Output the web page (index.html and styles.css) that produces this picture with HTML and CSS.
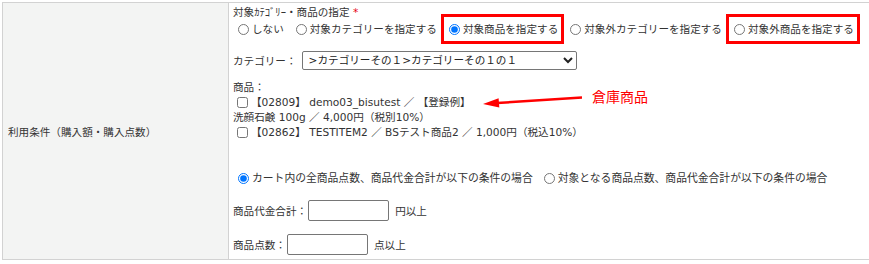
FILE: index.html
```html
<!DOCTYPE html>
<html lang="ja">
<head>
    <meta charset="utf-8">
    <title>利用条件</title>
    <link rel="stylesheet" href="styles.css">
</head>
<body>
    <div class="sheet">
        <table class="form-table">
            <tr>
                <th>利用条件（購入額・購入点数）</th>
                <td>
                    <div class="field-title">対象ｶﾃｺﾞﾘｰ・商品の指定 <span class="required">*</span></div>
                    <div class="choice-row">
                        <label class="choice"><input type="radio" name="target_type">しない</label>
                        <label class="choice"><input type="radio" name="target_type">対象カテゴリーを指定する</label>
                        <label class="choice marked"><input type="radio" name="target_type" checked>対象商品を指定する</label>
                        <label class="choice"><input type="radio" name="target_type">対象外カテゴリーを指定する</label>
                        <label class="choice marked"><input type="radio" name="target_type">対象外商品を指定する</label>
                    </div>

                    <div class="category-row">
                        <label for="category">カテゴリー：</label>
                        <select id="category" class="category-select">
                            <option>&gt;カテゴリーその１&gt;カテゴリーその１の１</option>
                        </select>
                    </div>

                    <div class="item-list">
                        <div>商品：</div>
                        <label class="item"><input type="checkbox">【02809】 demo03_bisutest ／ 【登録例】<br>洗顔石鹸 100g ／ 4,000円（税別10%）</label>
                        <label class="item"><input type="checkbox">【02862】 TESTITEM2 ／ BSテスト商品2 ／ 1,000円（税込10%）</label>
                    </div>

                    <div class="choice-row condition-row">
                        <label class="choice"><input type="radio" name="condition_type" checked>カート内の全商品点数、商品代金合計が以下の条件の場合</label>
                        <label class="choice"><input type="radio" name="condition_type">対象となる商品点数、商品代金合計が以下の条件の場合</label>
                    </div>

                    <div class="limit-row">
                        <label for="min_total">商品代金合計：</label>
                        <input class="limit-input" type="text" id="min_total">
                        <span>円以上</span>
                    </div>
                    <div class="limit-row">
                        <label for="min_count">商品点数：</label>
                        <input class="limit-input" type="text" id="min_count">
                        <span>点以上</span>
                    </div>
                </td>
            </tr>
        </table>

        <svg class="note-arrow" width="110" height="20" viewBox="0 0 110 20">
            <line x1="19" y1="13" x2="104" y2="7.5" stroke="#f00" stroke-width="2.5"/>
            <polygon points="5,14 21.3,17.6 20.6,8.3" fill="#f00"/>
        </svg>
        <span class="note-text">倉庫商品</span>
    </div>
</body>
</html>
```

FILE: styles.css
```css
body {
    margin: 0;
    font-family: "DejaVu Sans", "Noto Sans CJK JP", sans-serif;
    font-size: 10.6px;
    color: #333333;
    background-color: #ffffff;
    overflow: hidden;
}

.sheet {
    position: relative;
    padding: 2px 0 0 2px;
}

.form-table {
    border-collapse: collapse;
    width: 900px;
}

.form-table th,
.form-table td {
    border: 1px solid #d2d2d2;
}

.form-table th {
    width: 220px;
    padding: 0 0 0 5px;
    background-color: #f3f4f3;
    font-weight: normal;
    text-align: left;
    vertical-align: middle;
}

.form-table td {
    padding: 1px 0 4px 4px;
    vertical-align: top;
}

.field-title {
    line-height: 17px;
}

.required {
    color: #e60012;
}

.choice-row {
    display: flex;
    column-gap: 7px;
    line-height: 17px;
}

.choice {
    position: relative;
    display: flex;
    align-items: center;
}

.choice input {
    width: 11px;
    height: 11px;
    margin: 0 3px 0 5px;
}

/* red annotation frame */
.choice.marked::after {
    content: "";
    position: absolute;
    top: -7px;
    bottom: -6px;
    left: -3px;
    right: -6px;
    border: 3px solid #f00;
}

.category-row {
    display: flex;
    align-items: center;
    height: 20px;
    margin-top: 12px;
}

.category-select {
    width: 275px;
    height: 19px;
    margin-left: 5px;
    padding: 0 2px;
    font: inherit;
    color: #222222;
    border: 1px solid #767676;
    border-radius: 2px;
    background-color: #ffffff;
}

.item-list {
    margin-top: 10px;
    line-height: 15px;
}

.item {
    display: block;
}

.item input {
    width: 11px;
    height: 11px;
    margin: 0 3px 0 4px;
    vertical-align: -2px;
}

.condition-row {
    margin-top: 30px;
    font-size: 10.8px;
    column-gap: 6px;
}

.limit-row {
    display: flex;
    align-items: center;
    height: 21px;
    margin-top: 13px;
}

.limit-input {
    box-sizing: border-box;
    width: 81px;
    height: 21px;
    margin: 0 6px 0 1px;
    border: 1px solid #767676;
    border-radius: 2px;
    font: inherit;
}

.note-arrow {
    position: absolute;
    left: 478px;
    top: 90px;
}

.note-text {
    position: absolute;
    left: 592px;
    top: 89px;
    font-size: 14px;
    line-height: 16px;
    color: #f00;
}
```
